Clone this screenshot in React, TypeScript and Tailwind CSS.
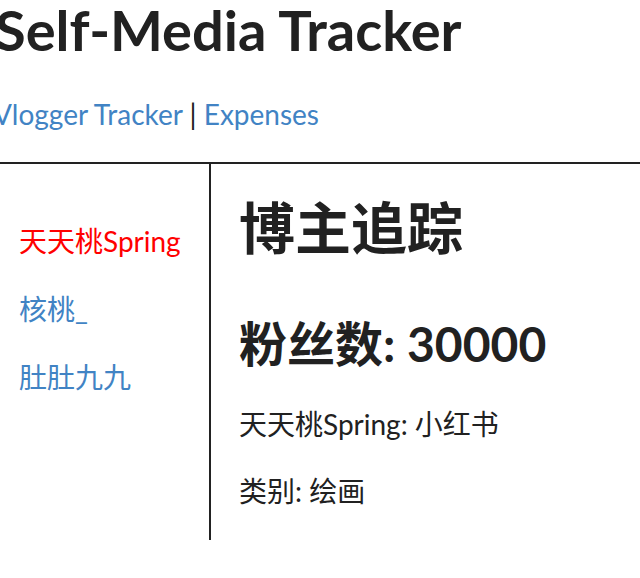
import React from "react";

export default function App() {
  const font = "font-['Lato','Noto_Sans_CJK_SC',sans-serif]";
  return (
    <div className={`${font} w-[640px] h-[578px] overflow-hidden bg-white text-[#212121]`}>
      <div className="-ml-[5px]">
        <h1 className="pt-[2px] text-[56px] leading-[56px] font-bold whitespace-nowrap">Self-Media Tracker</h1>
        <div className="mt-[42px] -ml-[2px] text-[28px] leading-[28px] whitespace-nowrap">
          <a className="text-[#4183c4]">Vlogger Tracker</a> | <a className="text-[#4183c4]">Expenses</a>
        </div>
      </div>
      <div className="mt-[34px] border-t-2 border-[#222] w-[660px] flex">
        <div className="w-[211px] h-[376px] border-r-2 border-[#222] flex flex-col pl-[19px] pt-[62px] gap-[38px] text-[28px] leading-[30px]">
          <a className="text-[#ff0000]">天天桃Spring</a>
          <a className="text-[#4183c4]">核桃_</a>
          <a className="text-[#4183c4]">肚肚九九</a>
        </div>
        <div className="pl-[28px] pt-[32px] flex flex-col">
          <h1 className="text-[56px] leading-[64px] font-bold">博主追踪</h1>
          <h2 className="mt-[58px] text-[48px] leading-[52px] font-bold">粉丝数: 30000</h2>
          <p className="mt-[39px] text-[28px] leading-[30px]">天天桃Spring: 小红书</p>
          <p className="mt-[37px] text-[28px] leading-[30px]">类别: 绘画</p>
        </div>
      </div>
    </div>
  );
}
